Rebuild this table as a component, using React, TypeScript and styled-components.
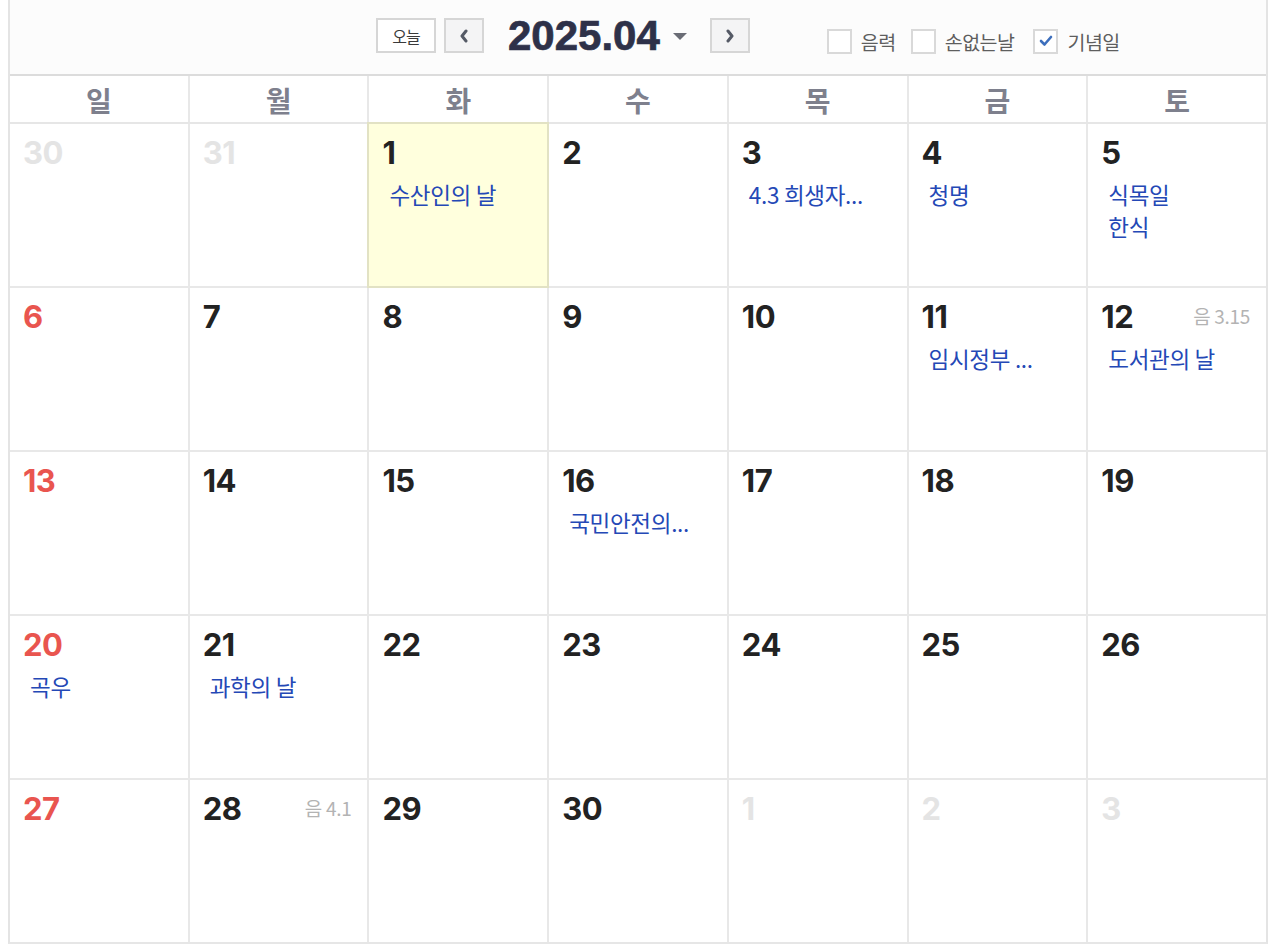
import React from "react";
import styled, { createGlobalStyle } from "styled-components";

const Global = createGlobalStyle`
  html, body { margin: 0; padding: 0; background: #ffffff; }
  body { font-family: "Noto Sans CJK KR", "Noto Sans", sans-serif; }
  * { box-sizing: border-box; }
`;

const Frame = styled.div`
  margin: 0 8px;
  width: 1260px;
  border-left: 2px solid #e4e4e4;
  border-right: 2px solid #e4e4e4;
  border-bottom: 2px solid #e6e6e6;
`;

const Toolbar = styled.div`
  height: 76px;
  background: #fcfcfc;
  border-bottom: 2px solid #dcdcdc;
  display: flex;
  align-items: flex-start;
  padding-left: 366px;
  padding-top: 18px;
`;

const Nav = styled.div`
  display: flex;
  align-items: center;
  height: 35px;
`;

const TodayButton = styled.button`
  width: 60px;
  height: 35px;
  border: 2px solid #d6d6d6;
  background: #ffffff;
  font-family: "Noto Sans CJK KR", sans-serif;
  font-size: 16px;
  color: #3a3a3a;
  padding: 0;
  margin-right: 8px;
  letter-spacing: -1px;
`;

const ArrowButton = styled.button`
  width: 40px;
  height: 35px;
  border: 2px solid #d6d6d6;
  background: #f4f4f5;
  display: flex;
  align-items: center;
  justify-content: center;
  padding: 0;
`;

const Title = styled.div`
  font-family: "Liberation Sans", Arial, sans-serif;
  font-weight: 700;
  font-size: 42px;
  line-height: 35px;
  color: #2e3149;
  margin-left: 24px;
  -webkit-text-stroke: 0.7px #2e3149;
`;

const Caret = styled.svg`
  margin-left: 12px;
  margin-right: 22px;
`;

const Options = styled.div`
  display: flex;
  align-items: center;
  margin-left: 77px;
  margin-top: 10px;
  height: 26px;
`;

const Option = styled.label<{ $gap: number }>`
  display: flex;
  align-items: center;
  margin-right: ${(p) => p.$gap}px;
  font-family: "Noto Sans CJK KR", sans-serif;
  font-size: 19.5px;
  color: #5e5e5e;
  letter-spacing: -0.5px;
`;

const Box = styled.span`
  width: 25px;
  height: 25px;
  border: 2px solid #d9d9d9;
  background: #ffffff;
  display: flex;
  align-items: center;
  justify-content: center;
  margin-right: 9px;
`;

const Grid = styled.div`
  display: grid;
  grid-template-columns: repeat(7, 1fr);
  column-gap: 2px;
  row-gap: 2px;
  background: #e8e8e8;
`;

const WeekHead = styled(Grid)`
  border-bottom: 2px solid #e6e6e6;
`;

const DayName = styled.div`
  background: #ffffff;
  height: 46px;
  display: flex;
  align-items: center;
  justify-content: center;
  font-family: "Noto Sans CJK KR", sans-serif;
  font-weight: 700;
  font-size: 28px;
  color: #7e808d;
  padding-top: 2px;
`;

const Cell = styled.div<{ $today?: boolean }>`
  height: 162px;
  background: ${(p) => (p.$today ? "#ffffdd" : "#ffffff")};
  outline: ${(p) => (p.$today ? "2px solid #e2e2c4" : "none")};
  padding: 13px 16px 0 13px;
  display: flex;
  flex-direction: column;
  min-width: 0;
`;

const CellTop = styled.div`
  display: flex;
  align-items: center;
  justify-content: space-between;
  height: 31px;
`;

const DayNum = styled.span<{ $tone: "normal" | "red" | "muted" }>`
  font-family: Inter, "Liberation Sans", sans-serif;
  font-weight: 700;
  font-size: 31px;
  line-height: 31px;
  letter-spacing: -0.5px;
  color: ${(p) =>
    p.$tone === "red" ? "#e9554f" : p.$tone === "muted" ? "#e4e4e4" : "#222222"};
`;

const Lunar = styled.span`
  font-family: "Noto Sans CJK KR", sans-serif;
  font-size: 19px;
  color: #b3b3b3;
  letter-spacing: -0.3px;
  margin-top: -3px;
`;

const Events = styled.div`
  margin-top: 10px;
  padding-left: 7px;
  display: flex;
  flex-direction: column;
`;

const Event = styled.div`
  font-family: "Noto Sans CJK KR", sans-serif;
  font-size: 22.5px;
  line-height: 32px;
  color: #2448b6;
  white-space: nowrap;
  letter-spacing: -0.3px;
`;

type Day = {
  n: number;
  tone?: "normal" | "red" | "muted";
  events?: string[];
  lunar?: string;
  today?: boolean;
};

const weeks: Day[][] = [
  [
    { n: 30, tone: "muted" },
    { n: 31, tone: "muted" },
    { n: 1, today: true, events: ["수산인의 날"] },
    { n: 2 },
    { n: 3, events: ["4.3 희생자..."] },
    { n: 4, events: ["청명"] },
    { n: 5, events: ["식목일", "한식"] },
  ],
  [
    { n: 6, tone: "red" },
    { n: 7 },
    { n: 8 },
    { n: 9 },
    { n: 10 },
    { n: 11, events: ["임시정부 ..."] },
    { n: 12, lunar: "음 3.15", events: ["도서관의 날"] },
  ],
  [
    { n: 13, tone: "red" },
    { n: 14 },
    { n: 15 },
    { n: 16, events: ["국민안전의..."] },
    { n: 17 },
    { n: 18 },
    { n: 19 },
  ],
  [
    { n: 20, tone: "red", events: ["곡우"] },
    { n: 21, events: ["과학의 날"] },
    { n: 22 },
    { n: 23 },
    { n: 24 },
    { n: 25 },
    { n: 26 },
  ],
  [
    { n: 27, tone: "red" },
    { n: 28, lunar: "음 4.1" },
    { n: 29 },
    { n: 30 },
    { n: 1, tone: "muted" },
    { n: 2, tone: "muted" },
    { n: 3, tone: "muted" },
  ],
];

const dayNames = ["일", "월", "화", "수", "목", "금", "토"];

const Chevron = ({ dir }: { dir: "left" | "right" }) => (
  <svg width="10" height="14" viewBox="0 0 10 14">
    <polyline
      points={dir === "left" ? "7,2 3,7 7,12" : "3,2 7,7 3,12"}
      fill="none"
      stroke="#555a66"
      strokeWidth="3"
      strokeLinecap="round"
      strokeLinejoin="round"
    />
  </svg>
);

const Check = () => (
  <svg width="14" height="12" viewBox="0 0 14 12">
    <polyline
      points="2,6 5.5,9.5 12,2"
      fill="none"
      stroke="#3d6fbd"
      strokeWidth="2.6"
      strokeLinecap="round"
      strokeLinejoin="round"
    />
  </svg>
);

export default function App() {
  return (
    <>
      <Global />
      <Frame>
        <Toolbar>
          <Nav>
            <TodayButton>오늘</TodayButton>
            <ArrowButton aria-label="이전 달">
              <Chevron dir="left" />
            </ArrowButton>
            <Title>2025.04</Title>
            <Caret width="16" height="8" viewBox="0 0 16 8">
              <polygon points="1,1 15,1 8,8" fill="#6a6c75" />
            </Caret>
            <ArrowButton aria-label="다음 달">
              <Chevron dir="right" />
            </ArrowButton>
          </Nav>
          <Options>
            <Option $gap={15}>
              <Box />
              음력
            </Option>
            <Option $gap={19}>
              <Box />
              손없는날
            </Option>
            <Option $gap={0}>
              <Box>
                <Check />
              </Box>
              기념일
            </Option>
          </Options>
        </Toolbar>
        <WeekHead>
          {dayNames.map((d) => (
            <DayName key={d}>{d}</DayName>
          ))}
        </WeekHead>
        <Grid>
          {weeks.flat().map((day, i) => (
            <Cell key={i} $today={day.today}>
              <CellTop>
                <DayNum $tone={day.tone ?? "normal"}>{day.n}</DayNum>
                {day.lunar && <Lunar>{day.lunar}</Lunar>}
              </CellTop>
              {day.events && (
                <Events>
                  {day.events.map((e) => (
                    <Event key={e}>{e}</Event>
                  ))}
                </Events>
              )}
            </Cell>
          ))}
        </Grid>
      </Frame>
    </>
  );
}
